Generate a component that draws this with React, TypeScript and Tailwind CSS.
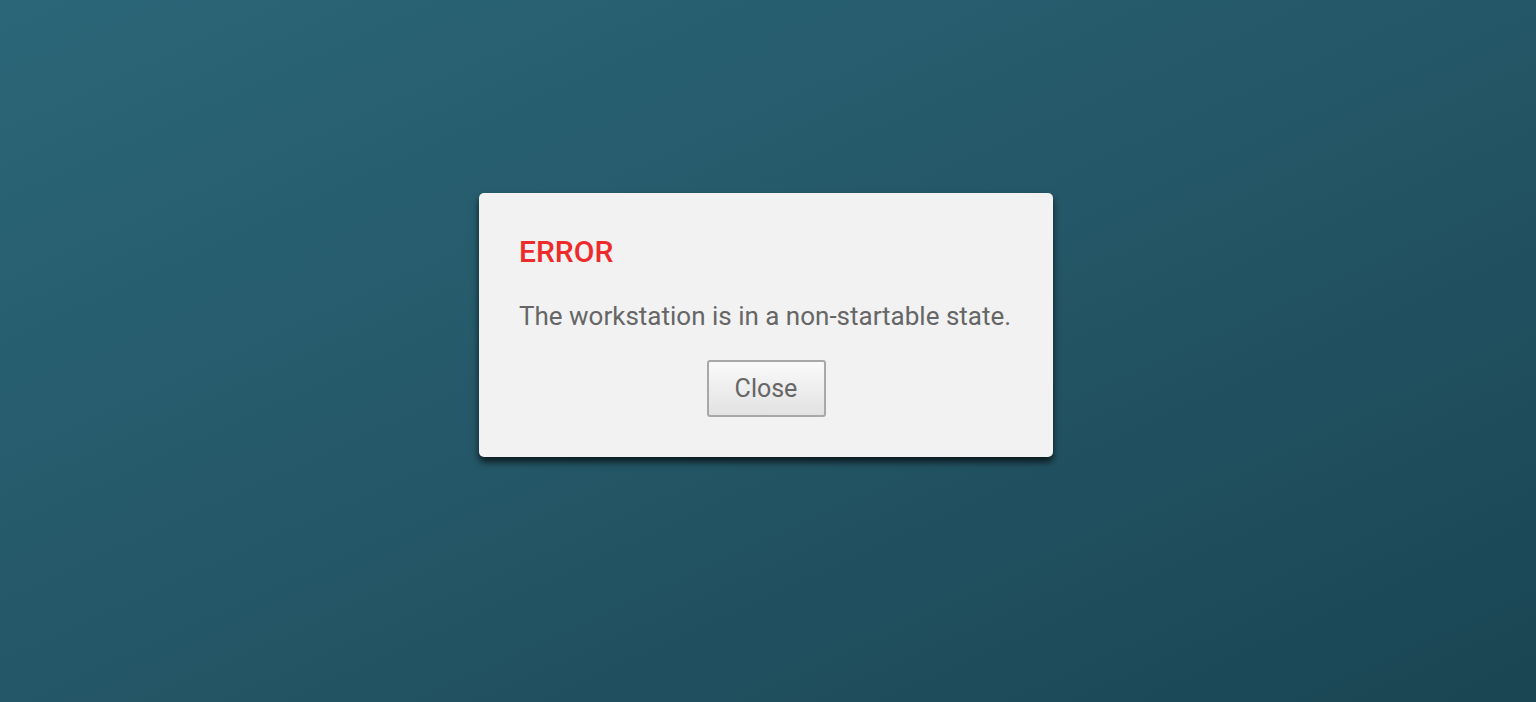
export default function App() {
  return (
    <div className="min-h-screen w-full flex items-start justify-center bg-gradient-to-br from-[#2b6678] via-[#245767] to-[#1a4553] font-['Roboto',sans-serif]">
      {/* Error dialog */}
      <div className="mt-[193px] mr-1 w-[574px] rounded-[5px] bg-[#f2f2f2] px-10 pt-[41px] pb-[40px] shadow-[0_5px_7px_rgba(0,0,0,0.7)]">
        <h1 className="text-[30px] leading-[36px] font-medium text-[#ee2b2b]">ERROR</h1>
        <p className="mt-[30px] text-[26px] leading-[32px] text-[#666666]">
          The workstation is in a non-startable state.
        </p>
        <div className="mt-[28px] flex justify-center">
          <button className="h-[57px] w-[119px] rounded-[3px] border-2 border-[#a8a8a8] bg-gradient-to-b from-[#fafafa] to-[#e2e2e2] text-[25px] text-[#666666]">
            Close
          </button>
        </div>
      </div>
    </div>
  );
}
